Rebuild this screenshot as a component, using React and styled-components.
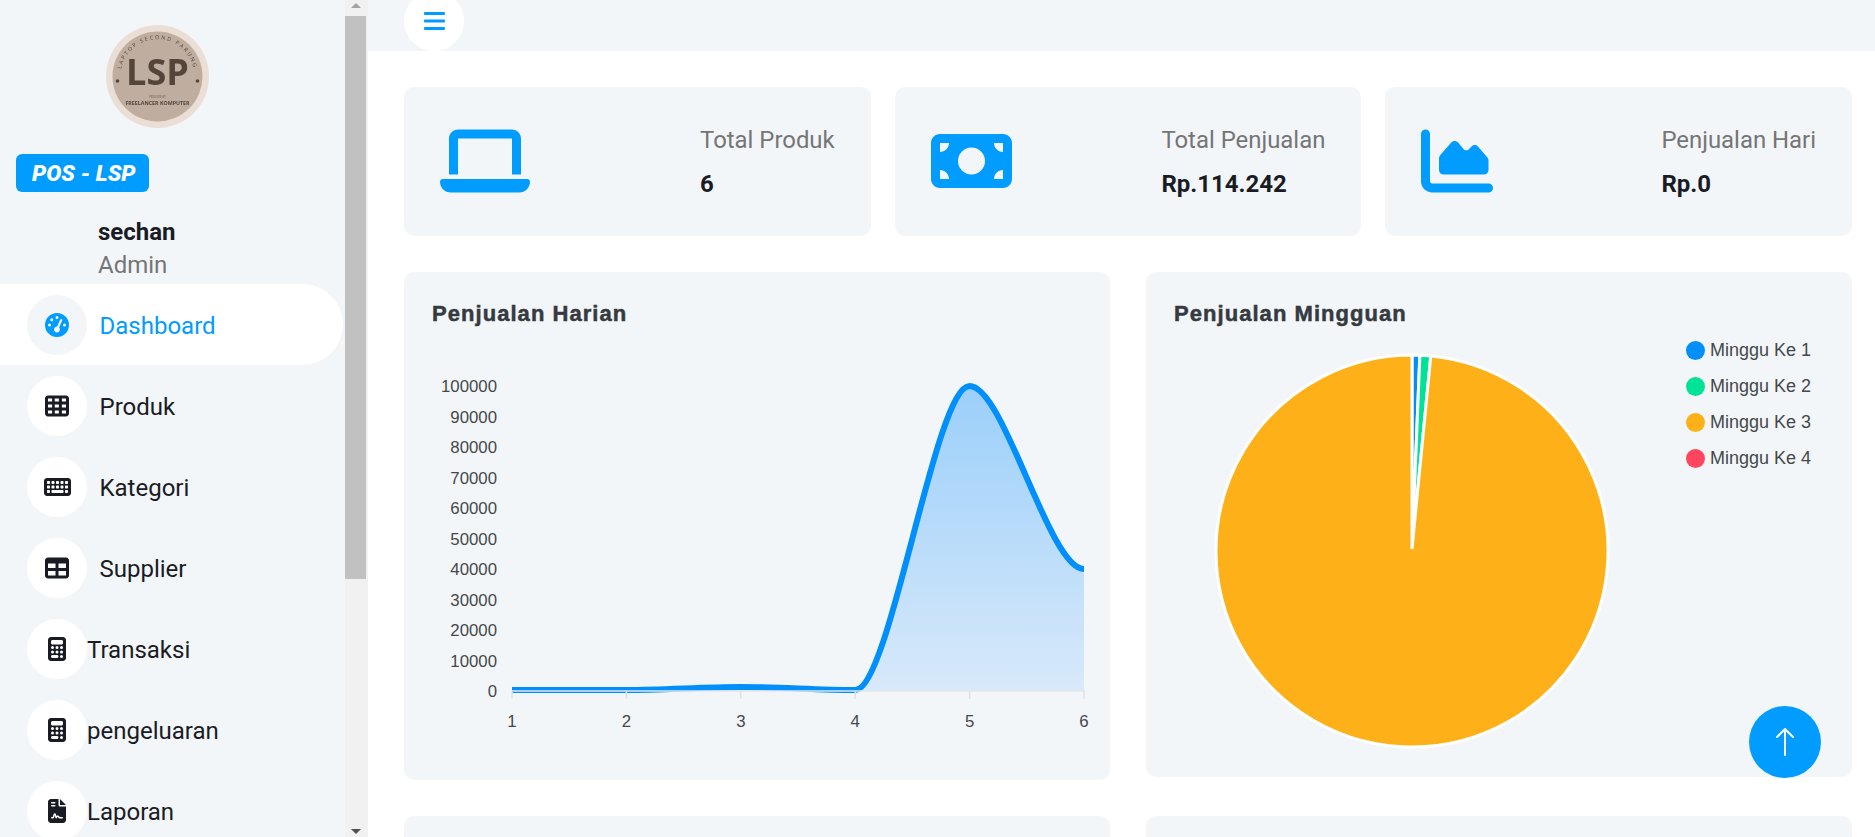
import React from "react";
import styled, { createGlobalStyle } from "styled-components";
import {
  FaGaugeHigh, FaTableCells, FaKeyboard, FaTable, FaCalculator,
  FaFileContract, FaLaptop, FaMoneyBill, FaChartArea,
} from "react-icons/fa6";
import { BsArrowUp } from "react-icons/bs";

const PRIMARY = "#009CFF";
const LIGHT = "#F3F6F9";
const DARK = "#191C24";
const CHART_TEXT = "#43484a";

const Global = createGlobalStyle`
  html, body { margin: 0; padding: 0; height: 100%; overflow: hidden; background: #fff; }
  body { font-family: Roboto, "Liberation Sans", sans-serif; color: #757575; }
  * { box-sizing: border-box; }
`;

const Page = styled.div`
  display: flex;
  height: 100vh;
  overflow: hidden;
`;

/* ---------- Sidebar ---------- */
const Sidebar = styled.aside`
  flex: none;
  width: 368px;
  height: 100%;
  display: flex;
  background: ${LIGHT};
`;
const SideContent = styled.div`
  flex: none;
  width: 345px;
  height: 100%;
  overflow: hidden;
`;
const LogoWrap = styled.div`
  display: flex;
  justify-content: center;
  padding: 25px 31px 0 0;
  svg { display: block; filter: blur(0.35px); }
`;
const Brand = styled.div`
  display: flex;
  align-items: center;
  width: 133px;
  height: 38px;
  margin: 26px 0 24px 16px;
  padding: 0 0 0 16px;
  border-radius: 6px;
  background: ${PRIMARY};
  color: #fff;
  font-size: 22.5px;
  font-weight: 900;
  font-style: italic;
  white-space: nowrap;
`;
const UserBlock = styled.div`
  padding: 0 0 2px 98px;
  font-size: 24px;
  line-height: 33px;
`;
const UserName = styled.div`
  color: ${DARK};
  font-weight: 700;
`;
const UserRole = styled.div`
  color: #757575;
`;
const Nav = styled.nav`
  display: flex;
  flex-direction: column;
`;
const NavItem = styled.a`
  flex: none;
  display: flex;
  align-items: center;
  width: 343px;
  height: 81px;
  padding-left: 27px;
  border-radius: ${(p) => (p.$active ? "0 40.5px 40.5px 0" : "0")};
  background: ${(p) => (p.$active ? "#fff" : "transparent")};
  color: ${(p) => (p.$active ? PRIMARY : DARK)};
  font-size: 24px;
`;
const NavIcon = styled.span`
  flex: none;
  display: flex;
  align-items: center;
  justify-content: center;
  width: 60px;
  height: 60px;
  border-radius: 50%;
  background: ${(p) => (p.$active ? LIGHT : "#fff")};
  svg { display: block; flex: none; width: ${(p) => p.$width || 24}px; height: 24px; }
`;
const NavLabel = styled.span`
  margin-left: ${(p) => (p.$tight ? "0" : "12.5px")};
  padding-top: 2px;
`;

const Scrollbar = styled.div`
  flex: none;
  width: 23px;
  height: 100%;
  display: flex;
  flex-direction: column;
  background: #f1f1f1;
`;
const ScrollArrow = styled.div`
  flex: none;
  height: 16px;
  display: flex;
  justify-content: center;
  align-items: ${(p) => (p.$down ? "flex-end" : "flex-start")};
  padding: ${(p) => (p.$down ? "0 2px 3px 0" : "3px 2px 0 0")};
  &::before {
    content: "";
    border-left: 5.5px solid transparent;
    border-right: 5.5px solid transparent;
    ${(p) => (p.$down ? "border-top: 5px solid #505050;" : "border-bottom: 5px solid #a3a3a3;")}
  }
`;
const ScrollTrack = styled.div`
  flex: 1;
`;
const ScrollThumb = styled.div`
  width: 21px;
  height: 563px;
  background: #c1c1c1;
`;

/* ---------- Main ---------- */
const Main = styled.main`
  position: relative;
  flex: 1;
  min-width: 0;
  height: 100%;
  overflow: hidden;
`;
const Topbar = styled.header`
  display: flex;
  align-items: flex-start;
  height: 51px;
  padding-left: 36px;
  background: ${LIGHT};
`;
const MenuButton = styled.button`
  flex: none;
  display: flex;
  align-items: center;
  justify-content: center;
  width: 60px;
  height: 60px;
  margin-top: -9px;
  padding: 0;
  border: 0;
  border-radius: 50%;
  background: #fff;
  color: ${PRIMARY};
`;
const Content = styled.div`
  padding: 36px 23px 0 36px;
  display: flex;
  flex-direction: column;
  gap: 36px;
`;
const StatRow = styled.section`
  display: grid;
  grid-template-columns: repeat(3, 1fr);
  gap: 24px;
`;
const StatCard = styled.div`
  display: flex;
  align-items: center;
  justify-content: space-between;
  height: 149px;
  padding: 0 36px;
  border-radius: 10px;
  background: ${LIGHT};
  color: ${PRIMARY};
  svg { display: block; flex: none; width: ${(p) => p.$iconWidth}px; height: 72px; margin-top: -2px; }
`;
const StatText = styled.div`
  display: flex;
  flex-direction: column;
  gap: 8px;
`;
const StatLabel = styled.p`
  margin: 0;
  color: #757575;
  font-size: 23.9px;
  line-height: 36px;
`;
const StatValue = styled.h6`
  margin: 0;
  color: ${DARK};
  font-size: 24px;
  line-height: 36px;
  font-weight: 700;
`;
const ChartRow = styled.section`
  display: grid;
  grid-template-columns: repeat(2, 1fr);
  gap: 36px;
  align-items: start;
`;
const ChartCard = styled.div`
  height: ${(p) => p.$height}px;
  padding: 27px 0 0 28px;
  border-radius: 10px;
  background: ${LIGHT};
`;
const ChartTitle = styled.h6`
  margin: 0;
  color: #353a40;
  font-family: "Liberation Sans", Arial, sans-serif;
  font-size: 22px;
  line-height: 30px;
  font-weight: 700;
  letter-spacing: 1.05px;
  -webkit-text-stroke: 0.5px #353a40;
`;
const AreaSvg = styled.svg`
  display: block;
  margin-top: 11px;
  font-family: "Liberation Sans", Arial, sans-serif;
  font-size: 16.8px;
  fill: ${CHART_TEXT};
`;
const PieBody = styled.div`
  display: flex;
  align-items: flex-start;
`;
const PieSvg = styled.svg`
  flex: none;
  display: block;
`;
const Legend = styled.ul`
  margin: 3px 0 0;
  padding: 0;
  list-style: none;
`;
const LegendItem = styled.li`
  display: flex;
  align-items: center;
  gap: 5px;
  height: 36px;
  color: ${CHART_TEXT};
  font-family: "Liberation Sans", Arial, sans-serif;
  font-size: 18px;
`;
const LegendDot = styled.span`
  flex: none;
  width: 19px;
  height: 19px;
  border-radius: 50%;
  background: ${(p) => p.$color};
`;
const BackToTop = styled.button`
  position: absolute;
  left: 1381px;
  top: 706px;
  display: flex;
  align-items: center;
  justify-content: center;
  width: 72px;
  height: 72px;
  padding: 0;
  border: 0;
  border-radius: 50%;
  background: ${PRIMARY};
  color: #fff;
`;

/* ---------- Data ---------- */
const navItems = [
  { label: "Dashboard", icon: FaGaugeHigh, active: true },
  { label: "Produk", icon: FaTableCells },
  { label: "Kategori", icon: FaKeyboard, width: 27 },
  { label: "Supplier", icon: FaTable },
  { label: "Transaksi", icon: FaCalculator, width: 18, tight: true },
  { label: "pengeluaran", icon: FaCalculator, width: 18, tight: true },
  { label: "Laporan", icon: FaFileContract, width: 18, tight: true },
];
const stats = [
  { label: "Total Produk", value: "6", icon: FaLaptop, width: 90 },
  { label: "Total Penjualan", value: "Rp.114.242", icon: FaMoneyBill, width: 81 },
  { label: "Penjualan Hari", value: "Rp.0", icon: FaChartArea, width: 72 },
];
const legend = [
  { label: "Minggu Ke 1", color: "#008FFB" },
  { label: "Minggu Ke 2", color: "#00E396" },
  { label: "Minggu Ke 3", color: "#FEB019" },
  { label: "Minggu Ke 4", color: "#FF4560" },
];
const yTicks = [0, 1, 2, 3, 4, 5, 6, 7, 8, 9, 10].map((i) => i * 10000);
const xTicks = [1, 2, 3, 4, 5, 6];
const tickX = (n) => 512 + (n - 1) * 114.4;
const tickY = (v) => 691 - v * 0.00305;

const CURVE =
  "M512 690 C550 690 588 690 626.4 690 C665 690 702 687 740.8 687 C779 687 817 690 855.2 690 C890 690 935 386 969.6 386 C1004 386 1049 569 1084 569";

function polar(cx, cy, r, deg) {
  const a = (deg * Math.PI) / 180;
  return [cx + r * Math.sin(a), cy - r * Math.cos(a)];
}
function slicePath(from, to) {
  const [x1, y1] = polar(1412, 551, 196, from);
  const [x2, y2] = polar(1412, 551, 196, to);
  const large = to - from > 180 ? 1 : 0;
  return `M1412 549 L${x1} ${y1} A196 196 0 ${large} 1 ${x2} ${y2} Z`;
}

function Logo() {
  return (
    <svg width="103" height="103" viewBox="0 0 103 103">
      <defs>
        <path id="logoRing" d="M14.8 56 A37 37 0 1 1 88.2 56" />
      </defs>
      <circle cx="51.5" cy="51.5" r="51.5" fill="#eaded5" />
      <circle cx="51.5" cy="51.5" r="45" fill="#bfaea0" />
      <circle cx="11.5" cy="56" r="1.8" fill="#54443a" />
      <circle cx="91.5" cy="56" r="1.8" fill="#54443a" />
      <text fontFamily="'Open Sans', sans-serif" fontSize="5.5" fill="#54443a" letterSpacing="1.7">
        <textPath href="#logoRing" startOffset="50%" textAnchor="middle">LAPTOP SECOND PARUNG</textPath>
      </text>
      <text x="51.5" y="60" textAnchor="middle" fontFamily="'Open Sans', sans-serif" fontSize="36" fontWeight="700" fill="#54443a">LSP</text>
      <text x="51.5" y="73" textAnchor="middle" fontFamily="'Open Sans', sans-serif" fontSize="3" fill="#6b5a4e">PROVIDE BY</text>
      <text x="51.5" y="80" textAnchor="middle" fontFamily="'Open Sans', sans-serif" fontSize="5.3" fontWeight="700" fill="#54443a">FREELANCER KOMPUTER</text>
    </svg>
  );
}

function AreaChart() {
  return (
    <AreaSvg width="678" height="400" viewBox="432 340 678 400">
      <defs>
        <linearGradient id="areaFill" gradientUnits="userSpaceOnUse" x1="0" y1="386" x2="0" y2="691">
          <stop offset="0" stopColor="#9bcffa" />
          <stop offset="1" stopColor="#d8e9fa" />
        </linearGradient>
      </defs>
      <path d={`${CURVE} L1084 691 L512 691 Z`} fill="url(#areaFill)" />
      <path d={CURVE} fill="none" stroke="#008FFB" strokeWidth="6" />
      <line x1="512" y1="691" x2="1084" y2="691" stroke="#e3e6e9" strokeWidth="1.5" />
      {xTicks.map((n) => (
        <g key={n}>
          <line x1={tickX(n)} y1="691" x2={tickX(n)} y2="699" stroke="#e0e0e0" strokeWidth="1.5" />
          <text x={tickX(n)} y="727" textAnchor="middle">{n}</text>
        </g>
      ))}
      {yTicks.map((v) => (
        <text key={v} x="497" y={tickY(v) + 6} textAnchor="end">{v}</text>
      ))}
    </AreaSvg>
  );
}

function PieChart() {
  return (
    <PieSvg width="512" height="448" viewBox="1174 329 512 448">
      <g stroke="#fff" strokeWidth="3" strokeLinejoin="miter">
        <path d={slicePath(0, 2.3)} fill="#008FFB" />
        <path d={slicePath(2.3, 5.5)} fill="#00E396" />
        <path d={slicePath(5.5, 360)} fill="#FEB019" />
      </g>
    </PieSvg>
  );
}

export default function App() {
  return (
    <Page>
      <Global />
      <Sidebar>
        <SideContent>
          <LogoWrap><Logo /></LogoWrap>
          <Brand>POS - LSP</Brand>
          <UserBlock>
            <UserName>sechan</UserName>
            <UserRole>Admin</UserRole>
          </UserBlock>
          <Nav>
            {navItems.map(({ label, icon: Icon, active, tight, width }) => (
              <NavItem key={label} $active={active}>
                <NavIcon $active={active} $width={width}><Icon /></NavIcon>
                <NavLabel $tight={tight}>{label}</NavLabel>
              </NavItem>
            ))}
          </Nav>
        </SideContent>
        <Scrollbar>
          <ScrollArrow />
          <ScrollTrack><ScrollThumb /></ScrollTrack>
          <ScrollArrow $down />
        </Scrollbar>
      </Sidebar>
      <Main>
        <Topbar>
          <MenuButton aria-label="Menu">
            <svg width="21" height="18" viewBox="0 0 21 18" fill="currentColor">
              <rect x="0" y="0" width="21" height="3" rx="1" />
              <rect x="0" y="7.5" width="21" height="3" rx="1" />
              <rect x="0" y="15" width="21" height="3" rx="1" />
            </svg>
          </MenuButton>
        </Topbar>
        <Content>
          <StatRow>
            {stats.map(({ label, value, icon: Icon, width }) => (
              <StatCard key={label} $iconWidth={width}>
                <Icon />
                <StatText>
                  <StatLabel>{label}</StatLabel>
                  <StatValue>{value}</StatValue>
                </StatText>
              </StatCard>
            ))}
          </StatRow>
          <ChartRow>
            <ChartCard $height={508}>
              <ChartTitle>Penjualan Harian</ChartTitle>
              <AreaChart />
            </ChartCard>
            <ChartCard $height={505}>
              <ChartTitle>Penjualan Mingguan</ChartTitle>
              <PieBody>
                <PieChart />
                <Legend>
                  {legend.map((l) => (
                    <LegendItem key={l.label}>
                      <LegendDot $color={l.color} />
                      {l.label}
                    </LegendItem>
                  ))}
                </Legend>
              </PieBody>
            </ChartCard>
          </ChartRow>
          <ChartRow>
            <ChartCard $height={300} />
            <ChartCard $height={300} />
          </ChartRow>
        </Content>
        <BackToTop aria-label="Kembali ke atas"><BsArrowUp size={32} /></BackToTop>
      </Main>
    </Page>
  );
}
